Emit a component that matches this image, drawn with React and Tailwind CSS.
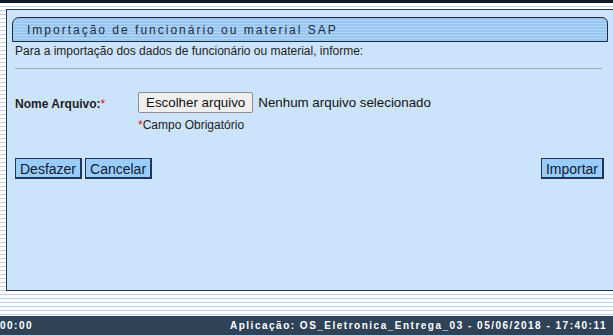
export default function App() {
  return (
    <div className="w-[613px] h-[335px] overflow-hidden flex flex-col bg-white font-['Liberation_Sans',Arial,sans-serif]">
      {/* top dark edge */}
      <div className="h-[3px] bg-[#111a26]" />

      {/* striped frame */}
      <div className="flex-1 flex flex-col pl-[6px] pt-[6px] pb-[25px] bg-[repeating-linear-gradient(to_bottom,#ffffff_0px,#ffffff_3px,#bcd1e6_3px,#bcd1e6_4px)]">
        <div className="flex-1 flex flex-col bg-[#cce4fb] border-l border-t border-b border-[#26374d]">
          {/* title tab */}
          <div className="mt-[7px] ml-[5px] mr-[5px] h-[25px] flex items-center pl-[14px] rounded-tl-[7px] rounded-tr-[6px] border border-[#1d2c42] bg-[repeating-linear-gradient(to_bottom,#9ac7f1_0px,#9ac7f1_2px,#b1d5f6_2px,#b1d5f6_3px)]">
            <span className="text-[12px] tracking-[2px] text-[#1b2a3f]">Importação de funcionário ou material SAP</span>
          </div>

          <div className="px-[8px]">
            <p className="mt-[1px] text-[12px] leading-[16px] text-[#1e1e1e]">
              Para a importação dos dados de funcionário ou material, informe:
            </p>
            <div className="mt-[9px] mr-[3px] h-px bg-[#a2a9b1]" />

            <div className="mt-[23px] flex items-start">
              <div className="w-[123px] pt-[3px] text-[12px] font-bold text-[#1e1e1e]">
                Nome Arquivo:<span className="font-normal text-[#d11]">*</span>
              </div>
              <div className="flex flex-col">
                <div className="flex items-center">
                  <button className="h-[21px] px-[7px] text-[13.33px] text-[#111] bg-[#efefef] border border-[#8f8f8f] rounded-[2px]">
                    Escolher arquivo
                  </button>
                  <span className="ml-[5px] text-[13.33px] text-[#111]">Nenhum arquivo selecionado</span>
                </div>
                <div className="mt-[4px] text-[12px] leading-[16px] text-[#1e1e1e]">
                  <span className="text-[#d11]">*</span>Campo Obrigatório
                </div>
              </div>
            </div>

            <div className="mt-[25px] flex items-center">
              <button className="h-[21px] px-[4px] text-[14px] text-[#111a2a] bg-[#99ccff] border border-[#233656] border-r-2 border-b-2">
                Desfazer
              </button>
              <button className="ml-[3px] h-[21px] px-[4px] text-[14px] text-[#111a2a] bg-[#99ccff] border border-[#233656] border-r-2 border-b-2">
                Cancelar
              </button>
              <div className="flex-1" />
              <button className="mr-[1px] h-[21px] px-[4px] text-[14px] text-[#111a2a] bg-[#99ccff] border border-[#233656] border-r-2 border-b-2">
                Importar
              </button>
            </div>
          </div>
        </div>
      </div>

      {/* footer */}
      <div className="h-[19px] flex items-center justify-between pr-[6px] bg-[#2e4358] text-white text-[10px] font-bold tracking-[1.5px]">
        <span>00:00</span>
        <span>Aplicação: OS_Eletronica_Entrega_03 - 05/06/2018 - 17:40:11</span>
      </div>
    </div>
  );
}
